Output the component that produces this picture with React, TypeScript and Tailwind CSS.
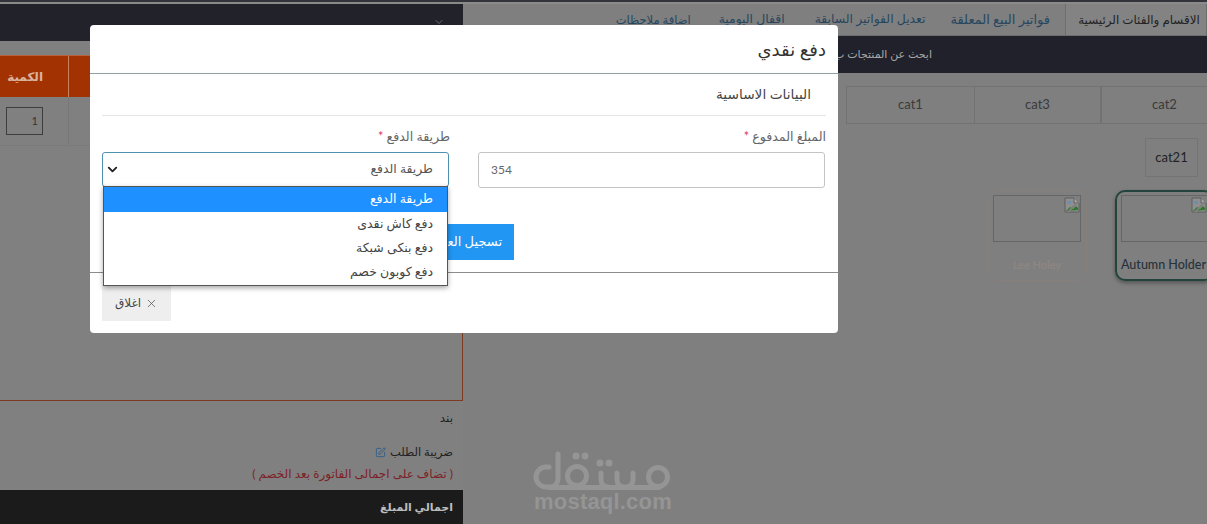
import { ChevronDown, X, SquarePen } from "lucide-react";

function BrokenImage() {
  return (
    <svg width="16" height="16" viewBox="0 0 16 16" className="shrink-0">
      <path d="M1 1h9l5 5v9H1z" fill="#8f8f8f" stroke="#5f5f5f" />
      <path d="M10 1v5h5" fill="#a5a5a5" stroke="#5f5f5f" />
      <path d="M2 14l4-4 3 2 3-3 2 2v2z" fill="#2f7a2a" />
      <path d="M3 4h4v3H3z" fill="#6f8fa8" />
      <path d="M15 4L4 15" stroke="#808080" strokeWidth="2" />
    </svg>
  );
}

function Logo() {
  return (
    <svg width="140" height="42" viewBox="0 0 140 42" fill="none" stroke="#959595" strokeWidth="5" strokeLinecap="round">
      <path d="M25 5V30a8 8 0 0 1-8 8H13a10 10 0 0 1-10-10a10 10 0 0 1 10-10h3" />
      <path d="M17 38.5H126" />
      <circle cx="44" cy="27" r="9.5" />
      <path d="M68 24v7a7 7 0 0 0 7 7M84 24v7a7 7 0 0 0 7 7M100 24v7a7 7 0 0 1-7 7" />
      <circle cx="125" cy="28" r="9.5" />
      <g fill="#959595" stroke="none">
        <circle cx="43" cy="7" r="3.5" />
        <circle cx="52" cy="7" r="3.5" />
        <circle cx="67" cy="14" r="3.5" />
        <circle cx="76" cy="14" r="3.5" />
      </g>
    </svg>
  );
}

const options = ["طريقة الدفع", "دفع كاش نقدى", "دفع بنكى شبكة", "دفع كوبون خصم"];

export default function App() {
  return (
    <div className="relative h-[524px] w-[1207px] overflow-hidden bg-[#808080] font-['Lato','DejaVu_Sans',sans-serif] text-[#2a2a2a]">
      <div className="h-[2px] bg-[#33343a]" />
      <div className="h-[2px] bg-[#8a8a8a]" />
      <div className="flex h-[520px]">
        {/* Invoice panel */}
        <div dir="rtl" className="flex w-[463px] flex-col">
          <div className="flex h-[37px] justify-start bg-[#22232a] px-[18px] pt-3">
            <ChevronDown className="size-3 text-[#6a6a6a]" />
          </div>
          <div className="mt-[14px] flex h-[346px] flex-col border-r border-b border-[#7d3a22]">
            <div className="flex h-[42px] border-t border-[#b9623c] bg-[#a33203]">
              <div className="flex-1" />
              <div className="flex w-[69px] items-center justify-start border-r border-[#c9825f] pr-[25px] text-[12px] font-bold text-[#d9b5a0]">
                الكمية
              </div>
            </div>
            <div className="flex h-[49px] border-b border-[#7a7a7a]">
              <div className="flex-1" />
              <div className="flex w-[69px] items-center border-r border-[#787878] pr-[25px]">
                <div className="flex h-[28px] w-[37px] items-center justify-start border border-[#3d3d3d] pr-[4px] text-[11px] text-[#333]">
                  1
                </div>
              </div>
            </div>
          </div>
          <div className="flex flex-1 flex-col pr-[10px]">
            <div className="mt-[8px] text-[12px] leading-[18px] text-[#1f1f1f]">بند</div>
            <div className="mt-[16px] flex items-center gap-1 text-[11.5px] leading-[18px] text-[#222]">
              ضريبة الطلب
              <SquarePen className="size-[11px] text-[#2f5d86]" />
            </div>
            <div className="mt-[4px] text-[12px] leading-[18px] text-[#7d1f27]">( تضاف على اجمالى الفاتورة بعد الخصم )</div>
          </div>
          <div className="flex h-[34px] shrink-0 items-center bg-[#1b1b1b] pr-[10px] text-[11px] font-bold text-[#bdbdbd]">
            اجمالي المبلغ
          </div>
        </div>

        {/* Products panel */}
        <div dir="rtl" className="flex min-w-0 flex-1 flex-col overflow-hidden bg-[#7f7f7f]">
          <div className="flex h-[32px] shrink-0 border-b border-[#6e6e6e] text-[12.4px]">
            <div className="flex w-[142px] items-center justify-center border-x border-[#6e6e6e] bg-[#838383] pl-[6px] text-[11.9px] whitespace-nowrap text-[#222]">
              الاقسام والفئات الرئيسية
            </div>
            <div className="flex items-center gap-[28px] pr-[15px] whitespace-nowrap text-[#274760]">
              <span className="ml-[-3px] text-[13px]">فواتير البيع المعلقة</span>
              <span className="ml-[2px]">تعديل الفواتير السابقة</span>
              <span>اقفال اليومية</span>
              <span className="text-[11.5px]">اضافة ملاحظات</span>
            </div>
          </div>
          <div className="flex h-[37px] shrink-0 items-center justify-between bg-[#20212a] pr-[275px] pl-[12px] text-[11px] text-[#a8a8a8]">
            <span>ابحث عن المنتجات ب</span>
            <ChevronDown className="size-3 text-[#6a6a6a]" />
          </div>
          <div className="mt-[13px] mr-[-20px] flex h-[38px] shrink-0 text-[13px] text-[#3a3a3a]">
            <div className="flex w-[126px] items-center justify-center border-y border-l border-[#727272]">cat2</div>
            <div className="flex w-[127px] items-center justify-center border border-[#727272]">cat3</div>
            <div className="flex w-[128px] items-center justify-center border-y border-l border-[#727272]">cat1</div>
          </div>
          <div className="mt-[14px] mr-[9px] flex h-[39px] w-[53px] shrink-0 items-center justify-center border border-[#747474] text-[13px] text-[#222]">
            cat21
          </div>
          <div className="mt-[13px] mr-[-7px] flex gap-[28px]">
            <div className="flex h-[91px] w-[99px] shrink-0 flex-col rounded-[10px] border-2 border-[#22443c] px-[4px] pt-[3px] shadow-[0_2px_4px_rgba(0,0,0,0.35)]">
              <div className="flex h-[47px] shrink-0 justify-end border border-[#666] pt-[1px] pl-[1px]" dir="ltr">
                <BrokenImage />
              </div>
              <div dir="ltr" className="mt-[14px] text-[12.5px] font-medium whitespace-nowrap text-[#26323a]">Autumn Holder</div>
            </div>
            <div className="flex h-[91px] w-[99px] shrink-0 flex-col rounded-[10px] border border-[#867f7c] pt-[4px] pr-[5px] pl-[4px]">
              <div className="flex h-[47px] shrink-0 justify-end border border-[#666] pt-[1px] pl-[1px]" dir="ltr">
                <BrokenImage />
              </div>
              <div dir="ltr" className="mt-[15px] text-center text-[11px] font-bold text-[#8d8682]">Lee Holey</div>
            </div>
          </div>
        </div>
      </div>

      {/* Watermark */}
      <div className="absolute top-[449px] left-[533px] flex flex-col items-center">
        <Logo />
        <span className="font-['Liberation_Sans',sans-serif] text-[22px] leading-[22px] font-bold tracking-[0.2px] text-[#959595]">
          mostaql.com
        </span>
      </div>

      {/* Payment modal */}
      <div dir="rtl" className="absolute top-[25px] left-[90px] flex h-[308px] w-[748px] flex-col rounded-[4px] bg-white text-[#555]">
        <div className="flex h-[49px] shrink-0 items-center border-b border-[#8ea2a8] pr-[12px] text-[18px] text-[#333]">دفع نقدي</div>
        <div className="mx-[12px] flex h-[42px] shrink-0 items-center border-b border-[#e6e6e6] pr-[15px] text-[13.7px] text-[#444]">
          البيانات الاساسية
        </div>
        <div className="mt-[13px] mr-[13px] ml-[12px] flex gap-[29px]">
          <div className="flex w-[347px] flex-col">
            <label className="mr-[-1px] text-[12.6px] leading-[16px] text-[#666]">
              المبلغ المدفوع <span className="text-[#e0325a]">*</span>
            </label>
            <div dir="ltr" className="mt-[7px] flex h-[36px] items-center rounded-[3px] border border-[#c4c4c4] px-[12px] text-[12px] text-[#666]">
              354
            </div>
          </div>
          <div className="relative flex w-[347px] flex-col">
            <label className="mr-[-1px] text-[12.6px] leading-[16px] text-[#666]">
              طريقة الدفع <span className="text-[#e0325a]">*</span>
            </label>
            <div className="mt-[7px] flex h-[35px] items-center justify-between rounded-[3px] border border-[#4f90b0] pr-[15px] pl-[2px] text-[12.4px] text-[#555]">
              طريقة الدفع
              <ChevronDown className="size-[15px] text-[#222]" strokeWidth={3} />
            </div>
            {/* Open select list */}
            <div className="absolute top-[57px] right-[1px] left-[1px] z-10 flex flex-col border border-[#555] bg-white pb-[1px] text-[12.5px] shadow-[0_2px_5px_rgba(0,0,0,0.35)]">
              {options.map((o, i) => (
                <div
                  key={o}
                  className={
                    i === 0
                      ? "flex h-[25px] items-center bg-[#1e90ff] pr-[14px] text-white"
                      : "flex h-[24px] items-center pr-[14px] text-[#444]"
                  }
                >
                  {o}
                </div>
              ))}
            </div>
          </div>
        </div>
        <div className="mt-[36px] mr-[324px] flex h-[36px] w-[100px] items-center overflow-hidden bg-[#2196f3] pr-[12px] text-[13px] whitespace-nowrap text-white">
          تسجيل العملية
        </div>
        <div className="mt-[12px] h-px shrink-0 bg-[#8d8d8d]" />
        <div className="mt-[12px] mr-[667px] flex h-[36px] w-[69px] items-center justify-center gap-1 bg-[#eeeeee] text-[12px] text-[#444]">
          <X className="size-[13px]" strokeWidth={1.25} />
          اغلاق
        </div>
      </div>
    </div>
  );
}
